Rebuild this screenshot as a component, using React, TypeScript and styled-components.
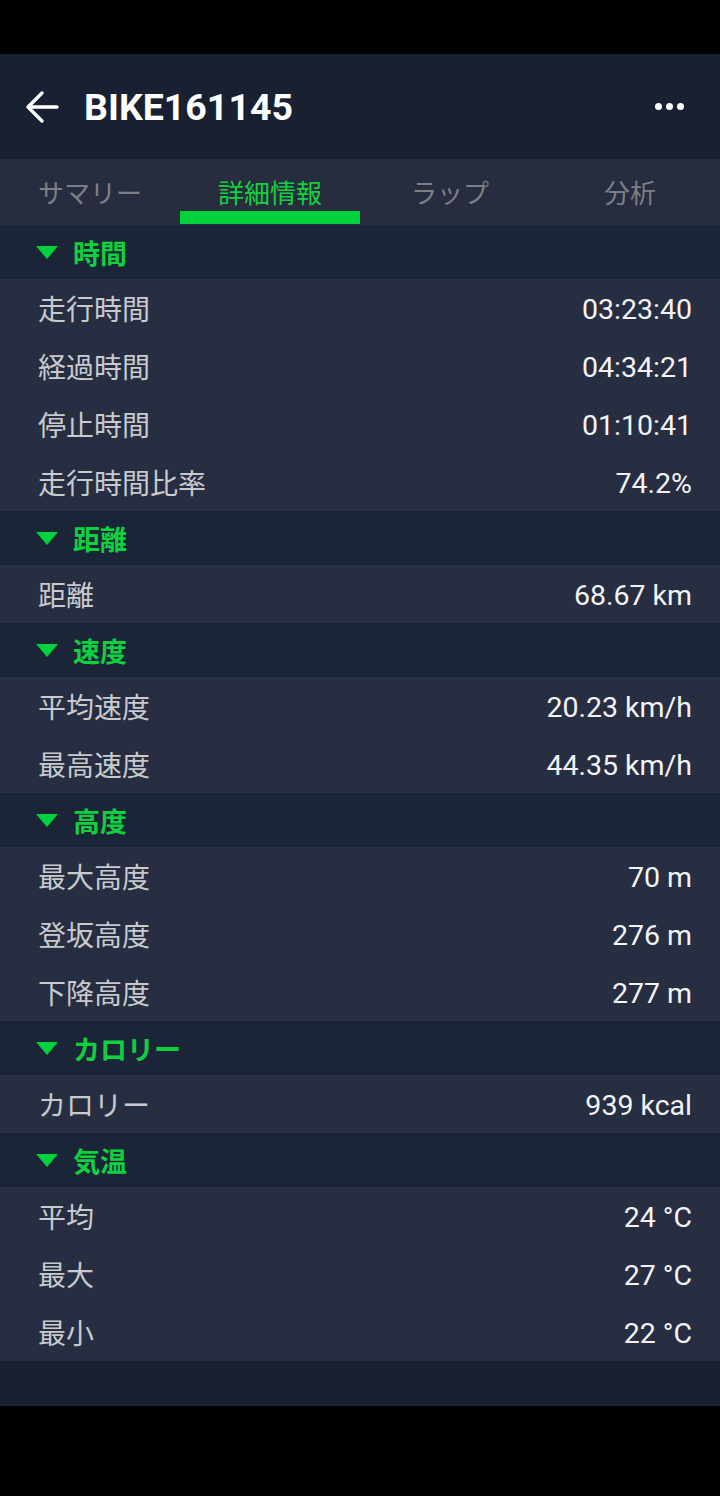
import { FC } from "react";
import styled, { createGlobalStyle } from "styled-components";

const GlobalStyle = createGlobalStyle`
  html, body {
    margin: 0;
    padding: 0;
    background: #000;
  }
  body {
    font-family: Roboto, "Noto Sans CJK JP", sans-serif;
    -webkit-font-smoothing: antialiased;
  }
`;

const Screen = styled.div`
  width: 720px;
  height: 1496px;
  display: flex;
  flex-direction: column;
  background: #000;
`;

const StatusBar = styled.div`
  height: 54px;
  flex-shrink: 0;
  background: #000;
`;

const Header = styled.header`
  height: 105px;
  display: flex;
  align-items: center;
  padding: 0 36px 0 24px;
  background: #182031;
  color: #fff;
`;

const BackButton = styled.button`
  width: 36px;
  height: 36px;
  margin-right: 24px;
  padding: 0;
  border: none;
  background: none;
  display: flex;
  align-items: center;
  justify-content: center;
`;

const Title = styled.h1`
  flex: 1;
  margin: 0;
  font-family: Roboto, sans-serif;
  font-size: 37.5px;
  font-weight: 700;
`;

const MoreButton = styled.button`
  display: flex;
  gap: 4px;
  padding: 0;
  border: none;
  background: none;
  span {
    width: 7px;
    height: 7px;
    border-radius: 50%;
    background: #fff;
  }
`;

const Tabs = styled.nav`
  height: 66px;
  display: grid;
  grid-template-columns: repeat(4, 1fr);
  background: #272d3f;
`;

const Tab = styled.div<{ $active?: boolean }>`
  position: relative;
  display: flex;
  align-items: center;
  justify-content: center;
  padding-bottom: 2px;
  font-size: 26px;
  color: ${(p) => (p.$active ? "#0fd23e" : "#7d7f84")};
  &::after {
    content: "";
    display: ${(p) => (p.$active ? "block" : "none")};
    position: absolute;
    left: 0;
    right: 0;
    bottom: 1px;
    height: 13px;
    background: #00d23c;
  }
`;

const Section = styled.section``;

const SectionHead = styled.div`
  height: 54px;
  display: flex;
  align-items: center;
  padding-left: 36px;
  background: #1b2538;
  color: #10d040;
  font-size: 27px;
  font-weight: 700;
`;

const Caret = styled.span`
  width: 0;
  height: 0;
  margin-right: 15px;
  border-left: 11px solid transparent;
  border-right: 11px solid transparent;
  border-top: 13px solid #00d23c;
`;

const RowList = styled.div`
  background: #272e41;
`;

const Row = styled.div`
  height: 58px;
  display: flex;
  align-items: center;
  justify-content: space-between;
  padding: 0 28px 0 38px;
`;

const Label = styled.span`
  font-size: 28px;
  color: #c9cace;
`;

const Value = styled.span`
  padding-top: 3px;
  font-family: Roboto, sans-serif;
  font-size: 28.5px;
  color: #f4f4f6;
`;

const Footer = styled.div`
  height: 45px;
  background: #182031;
`;

const BottomBar = styled.div`
  flex: 1;
  background: #000;
`;

type Item = [string, string];

const sections: { title: string; rows: Item[] }[] = [
  {
    title: "時間",
    rows: [
      ["走行時間", "03:23:40"],
      ["経過時間", "04:34:21"],
      ["停止時間", "01:10:41"],
      ["走行時間比率", "74.2%"],
    ],
  },
  { title: "距離", rows: [["距離", "68.67 km"]] },
  {
    title: "速度",
    rows: [
      ["平均速度", "20.23 km/h"],
      ["最高速度", "44.35 km/h"],
    ],
  },
  {
    title: "高度",
    rows: [
      ["最大高度", "70 m"],
      ["登坂高度", "276 m"],
      ["下降高度", "277 m"],
    ],
  },
  { title: "カロリー", rows: [["カロリー", "939 kcal"]] },
  {
    title: "気温",
    rows: [
      ["平均", "24 °C"],
      ["最大", "27 °C"],
      ["最小", "22 °C"],
    ],
  },
];

const tabs = ["サマリー", "詳細情報", "ラップ", "分析"];

const App: FC = () => {
  return (
    <>
      <GlobalStyle />
      <Screen>
        <StatusBar />
        <Header>
          <BackButton aria-label="back">
            <svg width="36" height="36" viewBox="0 0 36 36" fill="none">
              <path
                d="M33 18H4M18 4L4 18l14 14"
                stroke="#fff"
                strokeWidth="3.4"
                strokeLinecap="round"
                strokeLinejoin="round"
              />
            </svg>
          </BackButton>
          <Title>BIKE161145</Title>
          <MoreButton aria-label="more">
            <span />
            <span />
            <span />
          </MoreButton>
        </Header>
        <Tabs>
          {tabs.map((t, i) => (
            <Tab key={t} $active={i === 1}>
              {t}
            </Tab>
          ))}
        </Tabs>
        {sections.map((s) => (
          <Section key={s.title}>
            <SectionHead>
              <Caret />
              {s.title}
            </SectionHead>
            <RowList>
              {s.rows.map(([label, value]) => (
                <Row key={label}>
                  <Label>{label}</Label>
                  <Value>{value}</Value>
                </Row>
              ))}
            </RowList>
          </Section>
        ))}
        <Footer />
        <BottomBar />
      </Screen>
    </>
  );
};

export default App;
